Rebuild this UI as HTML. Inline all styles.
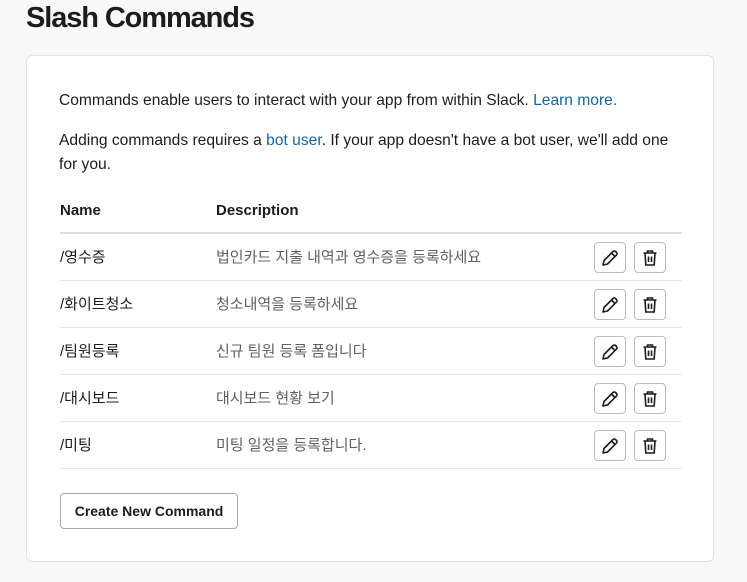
<!DOCTYPE html>
<html><head><meta charset="utf-8"><style>
*{box-sizing:border-box;margin:0;padding:0}
body{width:747px;height:582px;background:#f8f8f8;font-family:"Liberation Sans","Noto Sans CJK KR",sans-serif;color:#1d1c1d;position:relative;overflow:hidden}
h1{position:absolute;left:26px;top:2px;font-size:29px;font-weight:bold;letter-spacing:-1.1px;color:#1d1c1d}
.card{position:absolute;left:26px;top:55px;width:688px;height:507px;background:#fff;border:1px solid #e2e2e2;border-radius:6px}
p{position:absolute;left:32px;font-size:15.6px;line-height:24px;width:622px;color:#1d1c1d}
a{color:#1264a3;text-decoration:none}
.th{position:absolute;top:146px;font-size:15px;font-weight:bold}
.hl{position:absolute;left:33px;top:176px;width:622px;height:2px;background:#ddd}
.row{position:absolute;left:33px;width:622px;height:47px;border-bottom:1px solid #e6e6e6}
.n{position:absolute;left:0;top:12px;font-size:15px}
.d{position:absolute;left:156px;top:12px;font-size:15px;color:#616061}
.b{position:absolute;top:8px;width:32px;height:31px;border:1px solid #bbb;border-radius:4px;background:#fff;display:flex;align-items:center;justify-content:center}
.btn{position:absolute;left:33px;top:437px;width:178px;height:36px;border:1px solid #aaa;border-radius:4px;font-size:14px;font-weight:bold;display:flex;align-items:center;justify-content:center}
</style></head><body>
<h1>Slash Commands</h1>
<div class="card">
<p style="top:33px">Commands enable users to interact with your app from within Slack. <a>Learn more.</a></p>
<p style="top:73px">Adding commands requires a <a>bot user</a>. If your app doesn't have a bot user, we'll add one for you.</p>
<div class="th" style="left:33px">Name</div>
<div class="th" style="left:189px">Description</div>
<div class="hl"></div>
<div class="row" style="top:178px"><span class="n">/영수증</span><span class="d">법인카드 지출 내역과 영수증을 등록하세요</span>
<span class="b" style="left:534px"><svg width="20" height="20" viewBox="0 0 20 20" fill="none" stroke="#1d1c1d" stroke-width="1.6" stroke-linejoin="round"><path d="M3 17l1-4.5 9-9a1.8 1.8 0 0 1 2.5 0l1 1a1.8 1.8 0 0 1 0 2.5l-9 9z M11.5 5l3.5 3.5"/></svg></span>
<span class="b" style="left:574px"><svg width="20" height="20" viewBox="0 0 20 20" fill="none" stroke="#1d1c1d" stroke-width="1.6"><path d="M3.5 5h13M7.5 5V3h5v2M5 5l.8 12h8.4l.8-12M8.5 8.5v5.5M11.5 8.5v5.5"/></svg></span></div>
<div class="row" style="top:225px"><span class="n">/화이트청소</span><span class="d">청소내역을 등록하세요</span>
<span class="b" style="left:534px"><svg width="20" height="20" viewBox="0 0 20 20" fill="none" stroke="#1d1c1d" stroke-width="1.6" stroke-linejoin="round"><path d="M3 17l1-4.5 9-9a1.8 1.8 0 0 1 2.5 0l1 1a1.8 1.8 0 0 1 0 2.5l-9 9z M11.5 5l3.5 3.5"/></svg></span>
<span class="b" style="left:574px"><svg width="20" height="20" viewBox="0 0 20 20" fill="none" stroke="#1d1c1d" stroke-width="1.6"><path d="M3.5 5h13M7.5 5V3h5v2M5 5l.8 12h8.4l.8-12M8.5 8.5v5.5M11.5 8.5v5.5"/></svg></span></div>
<div class="row" style="top:272px"><span class="n">/팀원등록</span><span class="d">신규 팀원 등록 폼입니다</span>
<span class="b" style="left:534px"><svg width="20" height="20" viewBox="0 0 20 20" fill="none" stroke="#1d1c1d" stroke-width="1.6" stroke-linejoin="round"><path d="M3 17l1-4.5 9-9a1.8 1.8 0 0 1 2.5 0l1 1a1.8 1.8 0 0 1 0 2.5l-9 9z M11.5 5l3.5 3.5"/></svg></span>
<span class="b" style="left:574px"><svg width="20" height="20" viewBox="0 0 20 20" fill="none" stroke="#1d1c1d" stroke-width="1.6"><path d="M3.5 5h13M7.5 5V3h5v2M5 5l.8 12h8.4l.8-12M8.5 8.5v5.5M11.5 8.5v5.5"/></svg></span></div>
<div class="row" style="top:319px"><span class="n">/대시보드</span><span class="d">대시보드 현황 보기</span>
<span class="b" style="left:534px"><svg width="20" height="20" viewBox="0 0 20 20" fill="none" stroke="#1d1c1d" stroke-width="1.6" stroke-linejoin="round"><path d="M3 17l1-4.5 9-9a1.8 1.8 0 0 1 2.5 0l1 1a1.8 1.8 0 0 1 0 2.5l-9 9z M11.5 5l3.5 3.5"/></svg></span>
<span class="b" style="left:574px"><svg width="20" height="20" viewBox="0 0 20 20" fill="none" stroke="#1d1c1d" stroke-width="1.6"><path d="M3.5 5h13M7.5 5V3h5v2M5 5l.8 12h8.4l.8-12M8.5 8.5v5.5M11.5 8.5v5.5"/></svg></span></div>
<div class="row" style="top:366px"><span class="n">/미팅</span><span class="d">미팅 일정을 등록합니다.</span>
<span class="b" style="left:534px"><svg width="20" height="20" viewBox="0 0 20 20" fill="none" stroke="#1d1c1d" stroke-width="1.6" stroke-linejoin="round"><path d="M3 17l1-4.5 9-9a1.8 1.8 0 0 1 2.5 0l1 1a1.8 1.8 0 0 1 0 2.5l-9 9z M11.5 5l3.5 3.5"/></svg></span>
<span class="b" style="left:574px"><svg width="20" height="20" viewBox="0 0 20 20" fill="none" stroke="#1d1c1d" stroke-width="1.6"><path d="M3.5 5h13M7.5 5V3h5v2M5 5l.8 12h8.4l.8-12M8.5 8.5v5.5M11.5 8.5v5.5"/></svg></span></div>
<div class="btn">Create New Command</div>
</div>
</body></html>
